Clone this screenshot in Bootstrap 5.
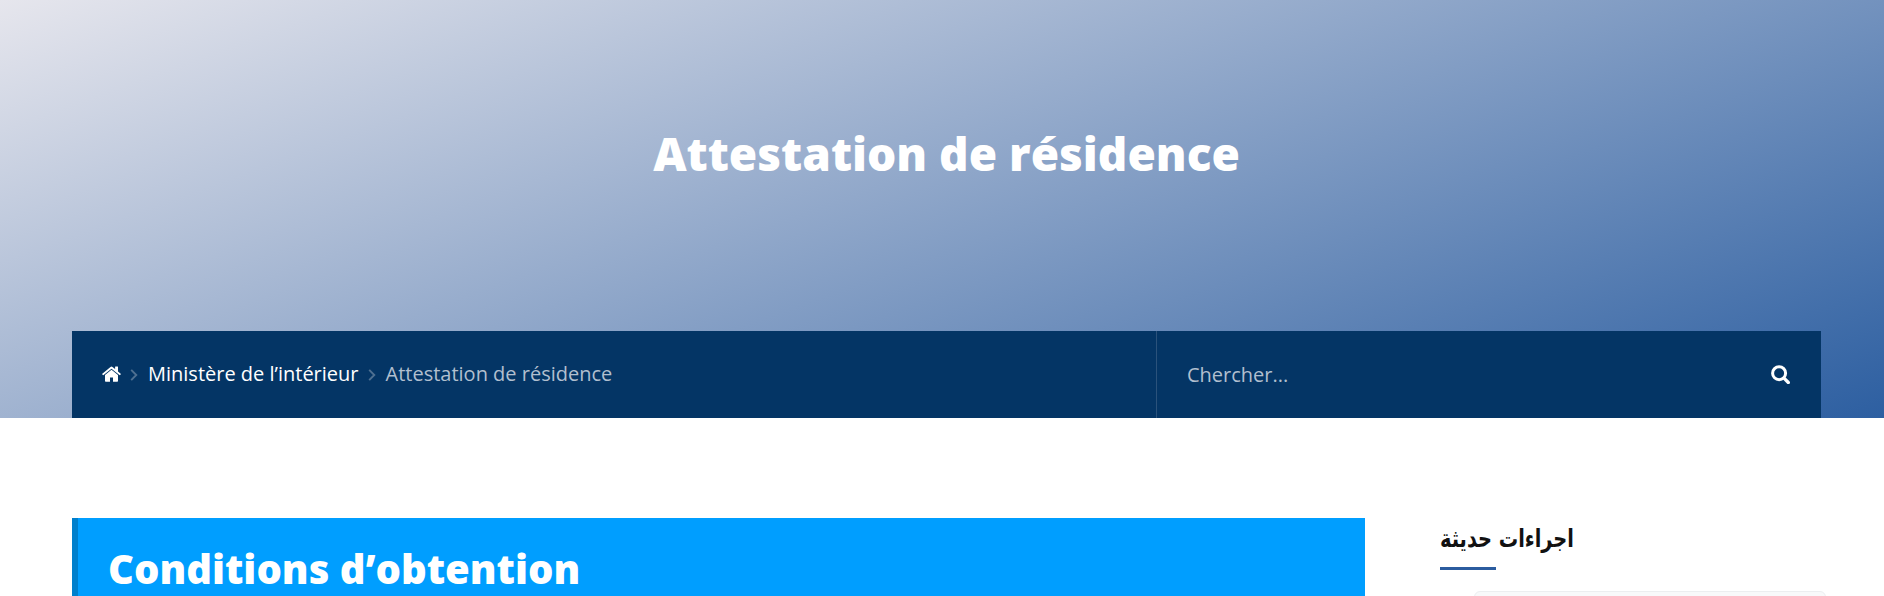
<!DOCTYPE html>
<html lang="fr">
<head>
<meta charset="utf-8">
<meta name="viewport" content="width=device-width, initial-scale=1">
<title>Attestation de résidence</title>
<link href="https://cdn.jsdelivr.net/npm/bootstrap@5.3.0/dist/css/bootstrap.min.css" rel="stylesheet">
<style>
  body { font-family: "Open Sans", "Noto Sans", sans-serif; overflow: hidden; height: 596px; }
  .page-wrap { width: 1749px; margin-left: 72px; }
  .hero { height: 418px; background: linear-gradient(160deg, #e6e6ed 0%, #2d5fa1 100%); }
  .hero-title { font-size: 46px; font-weight: 800; line-height: 60px; padding-top: 123px; padding-left: 9px; white-space: nowrap; }
  .crumb-bar { height: 87px; background: #043565; font-size: 20px; line-height: 28px; }
  .crumb-area { width: 1084px; padding: 0 0 2px 30px; }
  .chev { margin: 2px 10px 0 9px; }
  .faded { color: #b1bfcf; }
  .search-area { border-left: 1px solid #2b527b; padding: 0 31px 0 30px; }
  .search-area input { font-size: 20px; color: #b1bfcf; }
  .search-area input::placeholder { color: #b1bfcf; opacity: 1; }
  .main-row { margin-top: 100px; }
  .notice { width: 1293px; height: 78px; background: #009eff; border-left: 6px solid #007fcc; padding: 26px 30px 0; }
  .notice h2 { font-size: 40px; font-weight: 800; line-height: 50px; white-space: nowrap; }
  .side { width: 387px; height: 78px; overflow: hidden; margin-left: 75px; margin-right: -6px; }
  .side h3 { font-family: "DejaVu Sans Condensed", "DejaVu Sans", sans-serif; font-stretch: condensed; font-size: 21.5px; font-weight: 700; line-height: 32px; color: #111; margin: 5px 0 12px; white-space: nowrap; transform: scaleY(1.15); }
  .rule { width: 56px; height: 3px; background: #2b5c9f; }
  .side-card { margin: 21px 0 0 34px; width: 352px; height: 60px; background: #f8f9fa; border: 1px solid #eceef0; border-radius: 6px; }
</style>
</head>
<body>
<header class="hero d-flex flex-column justify-content-between">
  <h1 class="hero-title text-white text-center mb-0">Attestation de résidence</h1>
  <div class="page-wrap crumb-bar d-flex">
    <nav class="crumb-area d-flex align-items-center text-white" aria-label="Fil d’Ariane">
      <svg width="19" height="16" viewBox="0 0 19 16" fill="#fff" aria-hidden="true"><path d="M9.500 3.700 3 9V15q0 .8.800.8H8V11.500h3v4.300h4.200q.8 0 .8-.8V9z"/><path d="M18.700 7.800 16 5.500V.8q0-.4-.4-.4h-2.100q-.4 0-.4.4v2.300L10.500.900q-1-.8-2 0L.3 7.800q-.3.300 0 .6l.7.7q.3.300.6 0L9.500 2.700l7.900 6.400q.3.300.6 0l.7-.7q.3-.300 0-.6z"/></svg>
      <svg class="chev" width="8" height="12" viewBox="0 0 8 12" fill="none" stroke="#4f7091" stroke-width="1.900" aria-hidden="true"><path d="M1.200.8 6.300 6 1.200 11.200"/></svg>
      <span>Ministère de l’intérieur</span>
      <svg class="chev" width="8" height="12" viewBox="0 0 8 12" fill="none" stroke="#4f7091" stroke-width="1.900" aria-hidden="true"><path d="M1.200.8 6.300 6 1.200 11.200"/></svg>
      <span class="faded">Attestation de résidence</span>
    </nav>
    <form class="search-area d-flex align-items-center flex-grow-1">
      <input class="border-0 bg-transparent p-0 flex-grow-1" type="text" placeholder="Chercher...">
      <button class="btn p-0 border-0 d-flex" type="button" aria-label="Chercher">
        <svg width="19" height="19" viewBox="0 0 19 19" fill="none" stroke="#fff" aria-hidden="true"><circle cx="8.100" cy="8.200" r="6.500" stroke-width="3"/><path d="m13 13.200 4.300 4.300" stroke-width="3.300" stroke-linecap="round"/></svg>
      </button>
    </form>
  </div>
</header>
<main class="page-wrap main-row d-flex">
  <section class="notice text-white"><h2 class="mb-0">Conditions d’obtention</h2></section>
  <aside class="side">
    <h3 lang="ar">اجراءات حديثة</h3>
    <div class="rule"></div>
    <div class="side-card"></div>
  </aside>
</main>
<script src="https://cdn.jsdelivr.net/npm/bootstrap@5.3.0/dist/js/bootstrap.bundle.min.js"></script>
</body>
</html>
